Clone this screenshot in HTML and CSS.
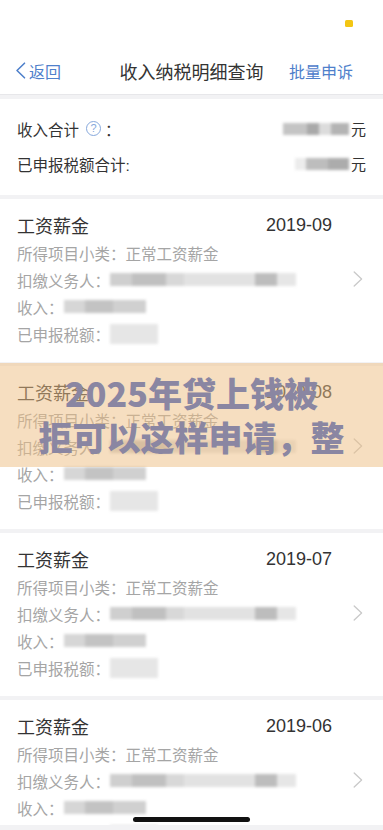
FILE: index.html
```html
<!DOCTYPE html>
<html lang="zh-CN">
<head>
<meta charset="utf-8">
<title>收入纳税明细查询</title>
<link rel="stylesheet" href="styles.css">
</head>
<body>
<div class="screen">
  <div class="status"><span class="status-dot"></span></div>
  <header class="nav">
    <a class="nav-back">
      <svg class="nav-back-icon" width="11" height="17" viewBox="0 0 11 17"><path d="M9.5 1.2 L2 8.5 L9.5 15.8" fill="none" stroke="#4f80cb" stroke-width="1.6" stroke-linecap="round" stroke-linejoin="round"/></svg>
      <span>返回</span>
    </a>
    <h1 class="nav-title">收入纳税明细查询</h1>
    <a class="nav-action">批量申诉</a>
  </header>

  <section class="summary">
    <div class="sum-row">
      <span class="sum-label">收入合计<span class="help">?</span><span class="colon">：</span></span>
      <span class="sum-value"><i class="blur blur-sum1"></i>元</span>
    </div>
    <div class="sum-row">
      <span class="sum-label">已申报税额合计:</span>
      <span class="sum-value"><i class="blur blur-sum2"></i>元</span>
    </div>
  </section>

  <section class="list">
    <article class="card">
      <div class="card-main">
        <div class="card-head"><span class="card-title">工资薪金</span><span class="card-date">2019-09</span></div>
        <div class="row">所得项目小类：正常工资薪金</div>
        <div class="row">扣缴义务人：<i class="blur blur-payer"></i></div>
        <div class="row">收入：<i class="blur blur-income"></i></div>
        <div class="row">已申报税额：<i class="blur blur-tax"></i></div>
      </div>
      <svg class="chev" width="10" height="16" viewBox="0 0 10 16"><path d="M1.2 1 L8.6 8 L1.2 15" fill="none" stroke="#c9c9c9" stroke-width="1.3" stroke-linecap="round" stroke-linejoin="round"/></svg>
    </article>
    <article class="card">
      <div class="card-main">
        <div class="card-head"><span class="card-title">工资薪金</span><span class="card-date">2019-08</span></div>
        <div class="row">所得项目小类：正常工资薪金</div>
        <div class="row">扣缴义务人：<i class="blur blur-payer"></i></div>
        <div class="row">收入：<i class="blur blur-income"></i></div>
        <div class="row">已申报税额：<i class="blur blur-tax"></i></div>
      </div>
      <svg class="chev" width="10" height="16" viewBox="0 0 10 16"><path d="M1.2 1 L8.6 8 L1.2 15" fill="none" stroke="#c9c9c9" stroke-width="1.3" stroke-linecap="round" stroke-linejoin="round"/></svg>
    </article>
    <article class="card">
      <div class="card-main">
        <div class="card-head"><span class="card-title">工资薪金</span><span class="card-date">2019-07</span></div>
        <div class="row">所得项目小类：正常工资薪金</div>
        <div class="row">扣缴义务人：<i class="blur blur-payer"></i></div>
        <div class="row">收入：<i class="blur blur-income"></i></div>
        <div class="row">已申报税额：<i class="blur blur-tax"></i></div>
      </div>
      <svg class="chev" width="10" height="16" viewBox="0 0 10 16"><path d="M1.2 1 L8.6 8 L1.2 15" fill="none" stroke="#c9c9c9" stroke-width="1.3" stroke-linecap="round" stroke-linejoin="round"/></svg>
    </article>
    <article class="card">
      <div class="card-main">
        <div class="card-head"><span class="card-title">工资薪金</span><span class="card-date">2019-06</span></div>
        <div class="row">所得项目小类：正常工资薪金</div>
        <div class="row">扣缴义务人：<i class="blur blur-payer"></i></div>
        <div class="row">收入：<i class="blur blur-income"></i></div>
        <div class="row">已申报税额：<i class="blur blur-tax"></i></div>
      </div>
      <svg class="chev" width="10" height="16" viewBox="0 0 10 16"><path d="M1.2 1 L8.6 8 L1.2 15" fill="none" stroke="#c9c9c9" stroke-width="1.3" stroke-linecap="round" stroke-linejoin="round"/></svg>
    </article>
  </section>

  <div class="promo">
    <span class="promo-line">2025年贷上钱被</span>
    <span class="promo-line">拒可以这样申请，整</span>
  </div>

  <div class="home-area"><span class="home-bar"></span></div>
</div>
</body>
</html>
```

FILE: styles.css
```css
* { box-sizing: border-box; }

html, body {
  margin: 0;
  padding: 0;
  height: 830px;
  overflow: hidden;
  background: #f2f2f4;
}

body {
  font-family: "Liberation Sans", "Noto Sans CJK SC", sans-serif;
  color: #333;
}

.screen {
  position: relative;
  width: 383px;
  height: 830px;
  overflow: hidden;
  display: flex;
  flex-direction: column;
  gap: 4px;
  background: #f2f2f4;
}

.status {
  height: 47px;
  margin-bottom: -4px;
  background: #fff;
  display: flex;
  justify-content: flex-end;
  align-items: flex-start;
  padding: 20px 30px 0 0;
  flex-shrink: 0;
}

.status-dot {
  width: 8px;
  height: 7px;
  border-radius: 1.5px;
  background: #f3c613;
}

.nav {
  height: 48px;
  background: #fff;
  border-bottom: 1px solid #e7e7ea;
  display: grid;
  grid-template-columns: 1fr auto 1fr;
  align-items: center;
  padding: 0 15px;
  flex-shrink: 0;
}

.nav-back {
  display: flex;
  align-items: center;
  gap: 3px;
  color: #4f80cb;
  font-size: 16px;
  justify-self: start;
}

.nav-back-icon { display: block; }

.nav-title {
  margin: 0;
  font-size: 18px;
  font-weight: normal;
  color: #333;
}

.nav-action {
  justify-self: end;
  color: #4f80cb;
  font-size: 16px;
  margin-right: 15px;
}

.summary {
  background: #fff;
  padding: 12px 17px 14px;
  flex-shrink: 0;
}

.sum-row {
  height: 35px;
  display: flex;
  justify-content: space-between;
  align-items: center;
  font-size: 15.5px;
  color: #333;
}

.sum-label {
  display: flex;
  align-items: center;
}

.help {
  width: 15px;
  height: 15px;
  margin-left: 7px;
  border: 1px solid #86a8dc;
  border-radius: 50%;
  color: #86a8dc;
  font-size: 11px;
  line-height: 1;
  display: inline-flex;
  justify-content: center;
  align-items: center;
}

.colon { margin-left: 4px; }

.sum-value {
  display: flex;
  align-items: center;
  font-size: 15px;
}

.blur {
  display: inline-block;
  filter: blur(1.4px);
}

.blur-sum1 {
  width: 66px;
  height: 12px;
  margin-right: 2px;
  background: linear-gradient(90deg, #c4c4c4 0 37%, #a9a9a9 37% 55%, #dcdcdc 55% 72%, #b4b4b4 72% 100%);
}

.blur-sum2 {
  width: 54px;
  height: 12px;
  margin-right: 2px;
  background: linear-gradient(90deg, #ececec 0 20%, #bdbdbd 20% 62%, #acacac 62% 100%);
}

.list {
  display: flex;
  flex-direction: column;
  gap: 4px;
}

.card {
  background: #fff;
  display: flex;
  align-items: center;
  padding: 12px 20px 15px 17px;
  flex-shrink: 0;
}

.card-main {
  flex: 1;
  min-width: 0;
}

.card-head {
  height: 28px;
  display: flex;
  justify-content: space-between;
  align-items: center;
  font-size: 18px;
  color: #333;
}

.row {
  height: 27px;
  display: flex;
  align-items: center;
  font-size: 15.5px;
  color: #a5a5a5;
  white-space: nowrap;
}

.blur-payer {
  width: 186px;
  height: 13px;
  background: linear-gradient(90deg, #cfcfcf 0 12%, #c0c0c0 12% 30%, #d8d8d8 30% 40%, #e2e2e2 40% 78%, #bdbdbd 78% 90%, #e6e6e6 90% 100%);
}

.blur-income {
  width: 82px;
  height: 13px;
  background: linear-gradient(90deg, #d6d6d6 0 25%, #c3c3c3 25% 60%, #d0d0d0 60% 100%);
}

.blur-tax {
  width: 48px;
  height: 20px;
  background: #e6e6e6;
}

.chev {
  flex-shrink: 0;
  margin-left: 21px;
  display: block;
}

.promo {
  position: absolute;
  left: 0;
  right: 0;
  top: 363px;
  height: 104px;
  padding-top: 8px;
  background: rgba(238, 190, 130, 0.5);
  display: flex;
  flex-direction: column;
  align-items: center;
  font-family: "Noto Sans CJK SC", sans-serif;
  font-size: 34px;
  font-weight: 900;
  color: #8a86a2;
}

.promo-line {
  display: block;
  height: 44px;
  line-height: 44px;
  white-space: nowrap;
}

.home-area {
  position: absolute;
  left: 0;
  right: 0;
  bottom: 0;
  height: 13px;
  display: flex;
  justify-content: center;
  background: linear-gradient(180deg, transparent 0 8px, #f2f2f4 8px 100%);
}

.home-bar {
  width: 117px;
  height: 5px;
  border-radius: 3px;
  background: #111;
}
```
